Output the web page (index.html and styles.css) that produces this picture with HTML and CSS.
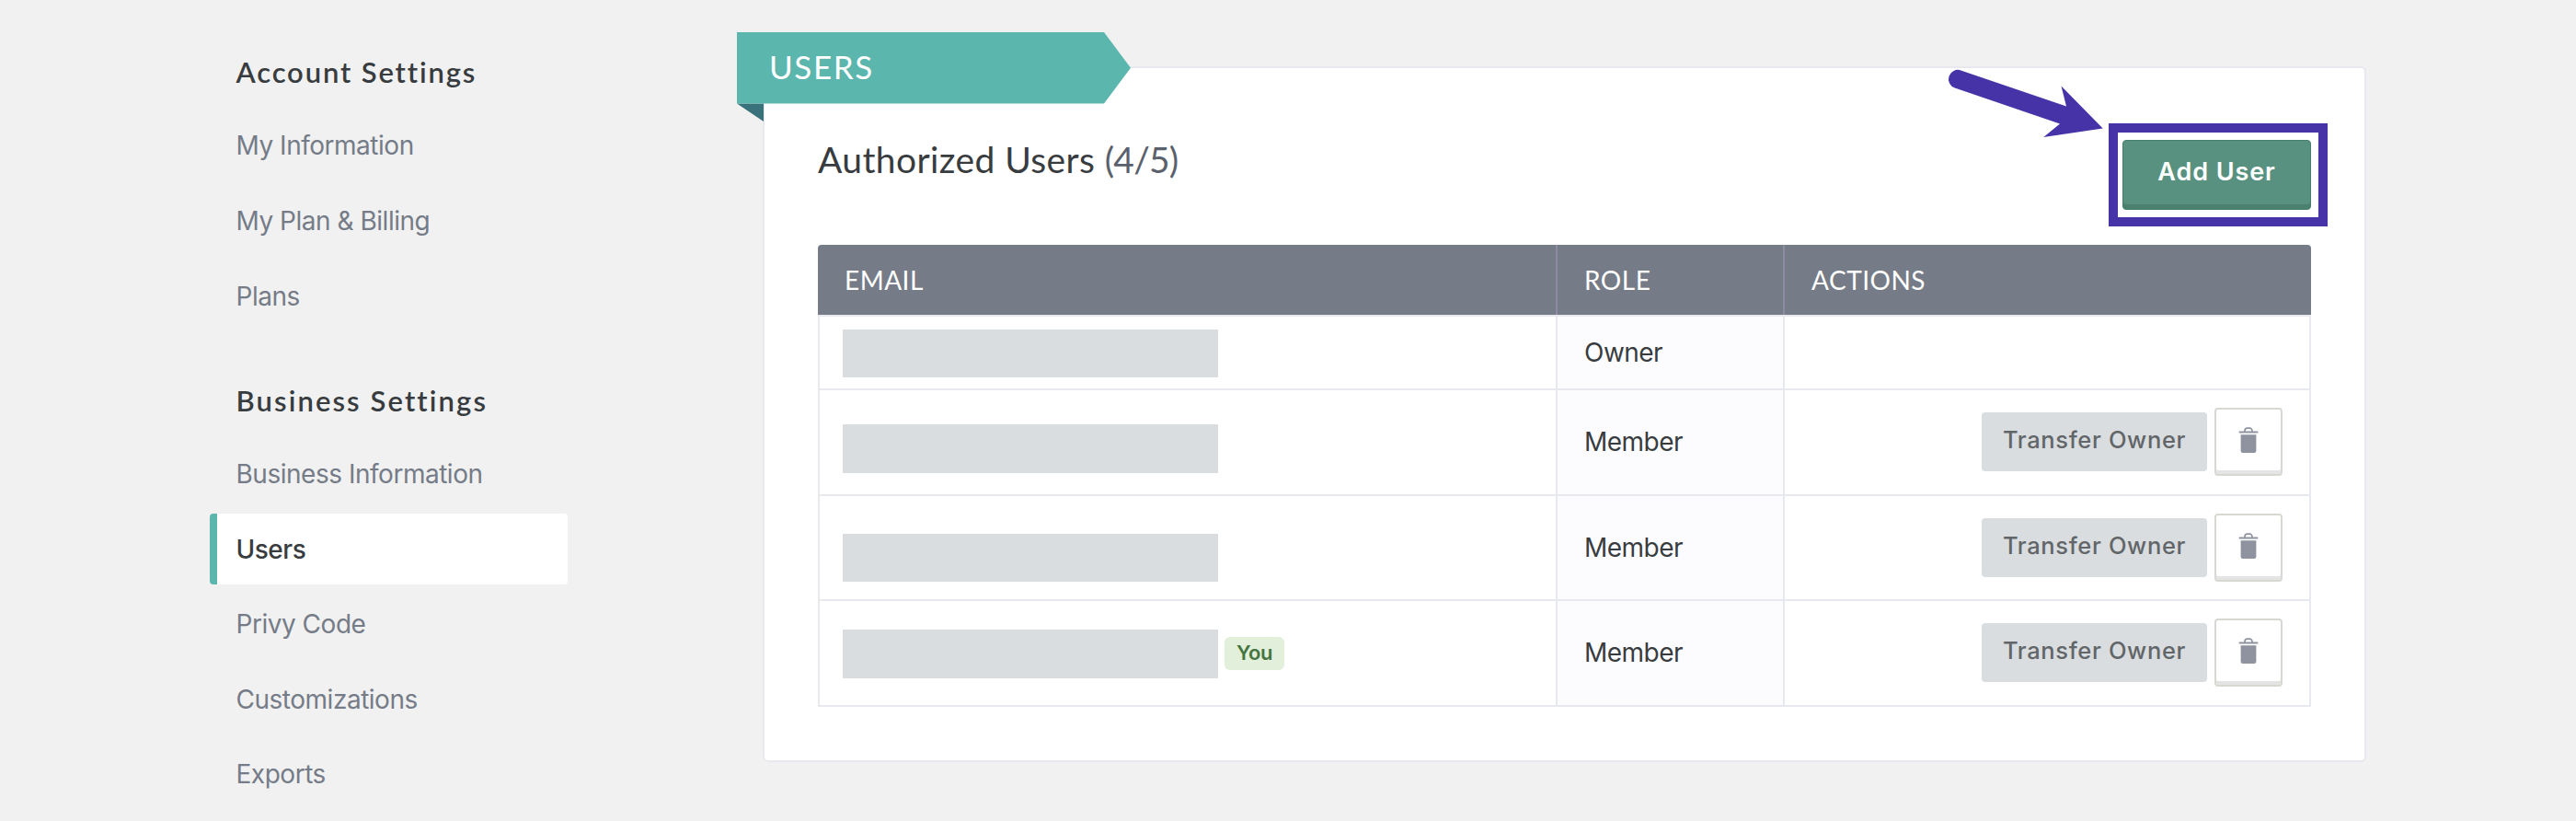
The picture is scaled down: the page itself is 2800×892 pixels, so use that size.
FILE: index.html
```html
<!DOCTYPE html>
<html lang="en">
<head>
<meta charset="utf-8">
<title>Users</title>
<link rel="stylesheet" href="styles.css">
</head>
<body>
<svg class="defs" width="0" height="0" aria-hidden="true">
  <symbol id="trash" viewBox="0 0 22 28">
    <path d="M7 5.2V4a2.8 2.8 0 0 1 2.8-2.8h2.4A2.8 2.8 0 0 1 15 4v1.2" fill="none" stroke="currentColor" stroke-width="1.7"/>
    <rect x=".5" y="4.6" width="21" height="2" rx="1"/>
    <path d="M2.6 8.2h16.8V25.7a2.2 2.2 0 0 1-2.2 2.2H4.8a2.2 2.2 0 0 1-2.2-2.2z"/>
  </symbol>
</svg>
<div class="page">
  <nav class="sidebar">
    <section class="group">
      <h2 class="group-title">Account Settings</h2>
      <a class="item">My Information</a>
      <a class="item">My Plan &amp; Billing</a>
      <a class="item">Plans</a>
    </section>
    <section class="group">
      <h2 class="group-title wide">Business Settings</h2>
      <a class="item">Business Information</a>
      <a class="item active">Users</a>
      <a class="item">Privy Code</a>
      <a class="item">Customizations</a>
      <a class="item">Exports</a>
    </section>
  </nav>
  <main class="card">
    <div class="ribbon"><svg class="ribbon-shape" viewBox="0 0 428 98" width="428" height="98"><path d="M0 77.5H29V97z" fill="#39727a"/><path d="M0 0H399L428 38.7 399 77.5H0z" fill="#5bb6ae"/></svg><span class="ribbon-text">USERS</span></div>
    <header class="card-head">
      <h1 class="title">Authorized Users <span class="count">(4/5)</span></h1>
      <button class="add">Add User</button>
    </header>
    <div class="table">
      <div class="row head"><div class="cell">EMAIL</div><div class="cell">ROLE</div><div class="cell">ACTIONS</div></div>
      <div class="row first"><div class="cell email"><span class="mask top"></span></div><div class="cell role">Owner</div><div class="cell"></div></div>
      <div class="row"><div class="cell email"><span class="mask low"></span></div><div class="cell role">Member</div><div class="cell actions"><button class="transfer">Transfer Owner</button><button class="delete"><svg class="icon"><use href="#trash"/></svg></button></div></div>
      <div class="row"><div class="cell email"><span class="mask lower"></span></div><div class="cell role">Member</div><div class="cell actions"><button class="transfer">Transfer Owner</button><button class="delete"><svg class="icon"><use href="#trash"/></svg></button></div></div>
      <div class="row last"><div class="cell email"><span class="mask top"></span><span class="you">You</span></div><div class="cell role">Member</div><div class="cell actions"><button class="transfer">Transfer Owner</button><button class="delete"><svg class="icon"><use href="#trash"/></svg></button></div></div>
    </div>
    <div class="highlight"></div>
    <svg class="arrow" viewBox="2110 70 180 85" width="180" height="85"><path d="M2131.3 76.4 2246 115.5 2240.5 93.5 2285.7 139.6 2221.3 149 2239 134.4 2124.8 95.5A10 10 0 0 1 2131.3 76.4z" fill="#4733a8"/></svg>
  </main>
</div>
</body>
</html>
```

FILE: styles.css
```css
* { box-sizing: border-box; }
body { margin: 0; background: #f1f1f1; font-family: Inter, "Liberation Sans", sans-serif; font-size: 28px; color: #383c3f; }
.defs { display: block; }
.page { display: flex; height: 892px; overflow: hidden; }
.sidebar { width: 389px; margin: 46px 212.5px 0 227.5px; flex: none; }
.group { display: flex; flex-direction: column; gap: 4px; margin-bottom: 42.4px; }
.group-title { margin: 0 0 5.4px; padding-left: 29px; height: 64px; line-height: 64px; font-family: Lato, sans-serif; font-size: 31px; font-weight: 600; letter-spacing: 1.85px; white-space: nowrap; }
.group-title.wide { letter-spacing: 2.1px; }
.item { height: 77.6px; line-height: 78px; padding-left: 21px; border-left: 8px solid transparent; border-radius: 4px; color: #757c88; letter-spacing: -.48px; white-space: nowrap; }
.item.active { background: #fff; border-left-color: #5bb6ae; color: #383c3f; font-weight: 500; }
.card { position: relative; flex: none; width: 1743px; height: 756px; margin-top: 72px; padding: 0 58px; background: #fff; border: 2px solid #e8e9ee; border-radius: 6px; }
.ribbon { position: absolute; left: -30px; top: -39px; width: 428px; height: 98px; }
.ribbon-shape { display: block; }
.ribbon-text { position: absolute; left: 35px; top: 0; line-height: 75px; color: #fff; font-family: Lato, sans-serif; font-size: 35px; letter-spacing: 1.6px; }
.card-head { display: flex; justify-content: space-between; height: 192px; }
.title { margin: 71px 0 0; height: 56px; line-height: 56px; font-family: Lato, sans-serif; font-size: 39px; font-weight: 400; letter-spacing: .4px; }
.count { color: #5a616d; letter-spacing: -.8px; }
button { padding: 0; font-family: inherit; font-size: 25.5px; text-align: center; }
.add { width: 205px; height: 76px; margin-top: 77.5px; padding-bottom: 7px; border: 1px solid #457f6c; border-radius: 4px; background: #58917f; box-shadow: inset 0 -5px #4b7f6e; color: #fff; font-size: 27px; font-weight: 600; letter-spacing: .9px; }
.highlight { position: absolute; left: 1461px; top: 60px; width: 238px; height: 112px; border: 10px solid #4733a8; }
.arrow { position: absolute; left: 1279px; top: -4px; }
.table { width: 1623px; border: 2px solid #e8e9ee; border-top: 0; border-radius: 5px 5px 0 0; }
.row { display: grid; grid-template-columns: 800px 247px 1fr; height: 114.7px; border-bottom: 2px solid #e8e9ee; }
.row.first { height: 80px; }
.row.last { height: 112.2px; border-bottom: 0; }
.cell { display: flex; align-items: center; padding-left: 29px; border-left: 2px solid #e8e9ee; letter-spacing: -.52px; }
.cell:first-child { border-left: 0; }
.row.head { height: 78px; margin: 0 -2px; grid-template-columns: 802px 247px 1fr; }
.head .cell { background: #767c87; color: #fff; font-family: Lato, sans-serif; border-left-color: #8c8b9f; padding-bottom: 1px; letter-spacing: .5px; }
.head .cell:first-child { border-radius: 4px 0 0 0; }
.head .cell:last-child { border-radius: 0 4px 0 0; }
.role { background: #fcfcff; }
.cell.email { padding-left: 25px; }
.mask { width: 408px; height: 52.5px; background: #d9dde0; }
.top { margin-top: 2px; }
.low { margin-top: 14px; }
.lower { margin-top: 22px; }
.you { margin: 2px 0 0 7px; width: 65px; height: 36px; line-height: 34px; border-radius: 6px; background: #e2efdb; color: #457540; font-size: 22px; font-weight: 600; text-align: center; }
.actions { justify-content: flex-end; padding-right: 29px; gap: 8px; }
.transfer { width: 245px; height: 64px; padding-bottom: 5px; border: 0; border-radius: 4px; background: #d9dde0; color: #626669; font-weight: 500; letter-spacing: .65px; }
.delete { width: 74px; height: 74px; display: flex; justify-content: center; border: 2px solid #d8d8d2; border-radius: 4px; background: #fff; box-shadow: inset 0 -4px #e4e4e4; color: #8e939f; }
.icon { width: 22px; height: 28px; margin-top: 19px; fill: currentColor; align-self: flex-start; }
```
